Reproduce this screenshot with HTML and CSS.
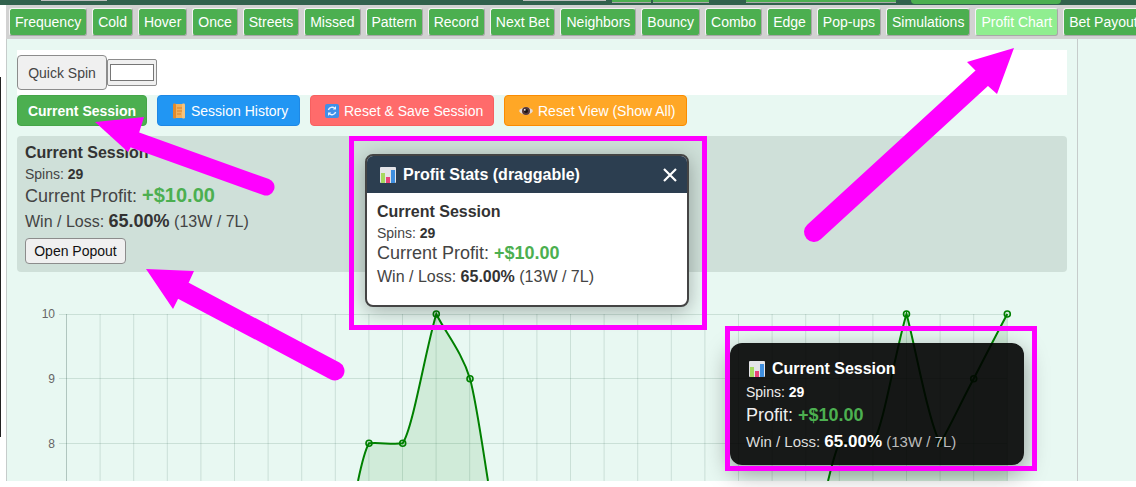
FILE: index.html
```html
<!DOCTYPE html>
<html lang="en">
<head>
<meta charset="utf-8">
<title>Profit Chart</title>
<link rel="stylesheet" href="styles.css">
</head>
<body>
<div class="page">
  <div class="topstrip">
    <span class="bit bit-a"></span>
    <span class="bit bit-b"></span>
    <span class="bit bit-c"></span>
    <span class="bit bit-d"></span>
    <span class="bit bit-e"></span>
    <span class="bit bit-f"></span>
  </div>
  <div class="shell">
    <nav class="tabs">
      <button class="tab">Frequency</button>
      <button class="tab">Cold</button>
      <button class="tab">Hover</button>
      <button class="tab">Once</button>
      <button class="tab">Streets</button>
      <button class="tab">Missed</button>
      <button class="tab">Pattern</button>
      <button class="tab">Record</button>
      <button class="tab">Next Bet</button>
      <button class="tab">Neighbors</button>
      <button class="tab">Bouncy</button>
      <button class="tab">Combo</button>
      <button class="tab">Edge</button>
      <button class="tab">Pop-ups</button>
      <button class="tab">Simulations</button>
      <button class="tab tab-active">Profit Chart</button>
      <button class="tab">Bet Payout</button>
    </nav>
    <div class="content">
      <main class="panel">
        <div class="spinrow">
          <button class="quick">Quick Spin</button>
          <span class="inputwrap"><input class="spininput" type="text" aria-label="Spin"></span>
        </div>
        <div class="actions">
          <button class="act act-green">Current Session</button>
          <button class="act act-blue">
            <svg class="ico" viewBox="0 0 14 16"><path d="M2 1h10v14H3z" fill="#f2b05a"/><rect x="1" y="0.5" width="3" height="15" rx="1.2" fill="#e08a2e"/><rect x="10" y="0.5" width="3" height="15" rx="1.2" fill="#f5c37c"/><path d="M5 5h5M5 8h5M5 11h4" stroke="#d9822b" stroke-width="1"/></svg>Session History
          </button>
          <button class="act act-red">
            <svg class="ico" viewBox="0 0 14 16"><rect x="0" y="1" width="14" height="14" rx="2" fill="#3f8fe8"/><path d="M3.4 7a3.8 3.8 0 0 1 6.4-1.6M10.6 9a3.8 3.8 0 0 1-6.4 1.6" fill="none" stroke="#e8f3ff" stroke-width="1.4"/><path d="M11 3v3.4H7.8zM3 13V9.600h3.200z" fill="#e8f3ff"/></svg>Reset &amp; Save Session
          </button>
          <button class="act act-orange">
            <svg class="ico" viewBox="0 0 14 16"><path d="M0 8c3-5 11-5 14 0-3 5-11 5-14 0z" fill="#e6dcd8"/><circle cx="7" cy="8" r="4" fill="#5a3a3a"/><circle cx="7" cy="8" r="2" fill="#1d1414"/><circle cx="5.800" cy="6.800" r="0.900" fill="#fff"/></svg>Reset View (Show All)
          </button>
        </div>
        <section class="summary">
          <h3 class="sum-title">Current Session</h3>
          <div class="sum-spins">Spins: <b>29</b></div>
          <div class="sum-profit">Current Profit: <b class="pos">+$10.00</b></div>
          <div class="sum-wl">Win / Loss: <b>65.00%</b> (13W / 7L)</div>
          <button class="popout">Open Popout</button>
        </section>
        <svg class="chart" viewBox="17 272 1050 209" width="1050" height="209">
          <g class="grid">
            <path class="axis" d="M66.500 314V481"/>
            <path d="M100.100 314V481M133.700 314V481M167.300 314V481M200.900 314V481M234.500 314V481M268.100 314V481M301.700 314V481M335.300 314V481M368.900 314V481M402.500 314V481M436.100 314V481M469.700 314V481M503.300 314V481M536.900 314V481M570.500 314V481M604.100 314V481M637.700 314V481M671.300 314V481M704.900 314V481M738.500 314V481M772.100 314V481M805.700 314V481M839.300 314V481M872.900 314V481M906.500 314V481M940.100 314V481M973.700 314V481M1007.300 314V481"/>
            <path d="M59 314.500H1007M59 378.500H1007M59 443.500H1007"/>
          </g>
          <g class="labels">
            <text x="55" y="318">10</text>
            <text x="55" y="383">9</text>
            <text x="55" y="448">8</text>
          </g>
          <path class="fill" d="M358 481C362 462 365 450 369 443.300C380 442 392 445 402.700 443.300C413 428 425 352 436.300 314C445 332 462 352 470 378.700C476 400 483 450 488 481Z"/>
          <path class="fill" d="M828 481C832 465 835 452 839.300 443.300C850 442 862 445 872.900 443.300C884 425 895 352 906.500 314C915 345 928 420 940.100 443.300C951 425 962 400 973.700 378.700C985 357 996 335 1007.300 314V481Z"/>
          <path class="line" d="M358 481C362 462 365 450 369 443.300C380 442 392 445 402.700 443.300C413 428 425 352 436.300 314C445 332 462 352 470 378.700C476 400 483 450 488 481"/>
          <path class="line" d="M828 481C832 465 835 452 839.300 443.300C850 442 862 445 872.900 443.300C884 425 895 352 906.500 314C915 345 928 420 940.100 443.300C951 425 962 400 973.700 378.700C985 357 996 335 1007.300 314"/>
          <g class="pts">
            <circle cx="369" cy="443.300" r="3"/><circle cx="402.700" cy="443.300" r="3"/><circle cx="436.300" cy="314" r="3"/><circle cx="470" cy="378.700" r="3"/>
            <circle cx="839.300" cy="443.300" r="3"/><circle cx="872.900" cy="443.300" r="3"/><circle cx="906.500" cy="314" r="3"/><circle cx="940.100" cy="443.300" r="3"/><circle cx="973.700" cy="378.700" r="3"/><circle cx="1007.300" cy="314" r="3"/>
          </g>
        </svg>
      </main>
    </div>
  </div>

  <div class="edge-line"></div>

  <aside class="stats">
    <header class="stats-head">
      <svg class="barico" viewBox="0 0 16 16"><rect width="16" height="16" rx="1" fill="#e4e4e8"/><rect x="1" y="6" width="4" height="10" fill="#a6d85f"/><rect x="6" y="10" width="4" height="6" fill="#e8437a"/><rect x="11" y="3" width="4" height="13" fill="#3f8fe0"/></svg>
      <span class="stats-title">Profit Stats (draggable)</span>
      <svg class="closex" viewBox="0 0 14 14"><path d="M1 1L13 13M13 1L1 13"/></svg>
    </header>
    <div class="stats-body">
      <h3 class="sum-title">Current Session</h3>
      <div class="sum-spins">Spins: <b>29</b></div>
      <div class="sum-profit small">Current Profit: <b class="pos">+$10.00</b></div>
      <div class="sum-wl small">Win / Loss: <b>65.00%</b> (13W / 7L)</div>
    </div>
  </aside>

  <aside class="hud">
    <div class="hud-title"><svg class="barico" viewBox="0 0 16 16"><rect width="16" height="16" rx="1" fill="#e4e4e8"/><rect x="1" y="6" width="4" height="10" fill="#a6d85f"/><rect x="6" y="10" width="4" height="6" fill="#e8437a"/><rect x="11" y="3" width="4" height="13" fill="#3f8fe0"/></svg>Current Session</div>
    <div class="hud-spins">Spins: <b>29</b></div>
    <div class="hud-profit">Profit: <b class="pos">+$10.00</b></div>
    <div class="hud-wl">Win / Loss: <b>65.00%</b> <span class="hud-rec">(13W / 7L)</span></div>
  </aside>

  <div class="mark mark-a"></div>
  <div class="mark mark-b"></div>

  <svg class="arrows" viewBox="0 0 1136 487" width="1136" height="487">
    <path class="shaft s1" d="M266 187L135 140"/>
    <path class="head" d="M95 122L144 117L139 133L128 152Z"/>
    <path class="shaft s2" d="M814 232L982 78"/>
    <path class="head" d="M1014 48L967 62L976 71L988 86L997 94Z"/>
    <path class="shaft s3" d="M335 371L182 290"/>
    <path class="head" d="M146 269L194 271L189 282L178 299L173 309Z"/>
  </svg>
</div>
</body>
</html>
```
FILE: styles.css
```css
* { box-sizing: border-box; }
html, body { margin: 0; padding: 0; background: #fff; }
body { font-family: "Liberation Sans", Arial, sans-serif; color: #444; }
.page { position: relative; width: 1136px; height: 487px; overflow: hidden; background: #fff; }

.topstrip { display: flex; align-items: flex-start; height: 5px; background: #31614d; }
.bit { display: block; }
.bit-a { width: 66px; height: 1px; margin-left: 41px; background: #bdbdbd; }
.bit-b { width: 83px; height: 1px; margin-left: 416px; background: #bdbdbd; }
.bit-c { width: 39px; height: 3px; margin-left: 6px; background: #4caf50; border-bottom: 1px solid #aaa; }
.bit-d { width: 56px; height: 3px; margin-left: 2px; background: #4caf50; border-bottom: 1px solid #aaa; }
.bit-e { width: 150px; height: 3px; margin-left: 37px; background: #4caf50; border-bottom: 1px solid #aaa; }
.bit-f { width: 150px; height: 4px; margin-left: 15px; background: #4caf50; border-radius: 0 0 4px 4px; }

.shell { margin-left: 6px; }
.tabs { display: flex; gap: 5px; height: 34px; padding: 3px 0 0 3px; background: #d2d2d2; overflow: hidden; white-space: nowrap; }
.tab {
  flex: none; height: 28px; padding: 0 5px; font: 14px/16px "Liberation Sans", Arial, sans-serif;
  color: #fff; background: #4caf50; border: 1px solid; border-color: #f4f4f4 #a8a8a8 #a8a8a8 #f4f4f4; border-radius: 3px;
}
.tab-active { background: #90ee90; }

.content { background: #e8f8f2; height: 442px; }
.panel { width: 1072px; height: 442px; padding: 11px 10px 0; border-left: 1px solid #c6cccb; border-right: 1px solid #c6cccb; overflow: hidden; }

.spinrow { display: flex; align-items: center; height: 45px; background: #fff; }
.quick { width: 90px; height: 35px; padding: 0; font: 14px "Liberation Sans", Arial, sans-serif; color: #444; background: #f0f0f0; border: 1px solid #8c8c8c; border-radius: 4px; }
.inputwrap { display: flex; align-items: center; justify-content: center; width: 50px; height: 27px; background: #f0f0f0; border: 1px solid #8c8c8c; border-radius: 2px; }
.spininput { width: 44px; height: 17px; padding: 0; background: #fff; border: 1px solid #767676; }

.actions { display: flex; gap: 10px; height: 31px; }
.act { display: flex; align-items: center; padding: 0 10px; font: 14px "Liberation Sans", Arial, sans-serif; color: #fff; border: 1px solid; border-radius: 4px; white-space: nowrap; }
.act-green { background: #4caf50; border-color: #45a549; font-weight: bold; width: 130px; justify-content: center; }
.act-blue { background: #2196f3; border-color: #1e88e5; width: 143px; }
.act-red { background: #ff6b6b; border-color: #f76060; width: 184px; }
.act-orange { background: #ffa726; border-color: #fb8c00; width: 183px; }
.ico { width: 14px; height: 16px; margin: 0 5px 0 4px; flex: none; }

.summary { height: 136px; margin-top: 10px; padding: 8px; background: #cfe0d9; border-radius: 4px; }
.sum-title { margin: 0; font-size: 16px; line-height: 18px; font-weight: bold; color: #333; }
.sum-spins { margin-top: 4px; font-size: 14px; line-height: 16px; }
.sum-spins b, .sum-wl b { color: #333; }
.sum-profit { margin-top: 1px; font-size: 18px; line-height: 25px; }
.sum-profit b { font-size: 20px; }
.sum-profit .pos { color: #4caf50; }
.pos { color: #4caf50; }
.sum-wl { margin-top: 1px; font-size: 16px; line-height: 22px; }
.sum-wl b { font-size: 18px; }
.popout { display: block; width: 101px; height: 26px; margin-top: 5px; padding: 0; font: 14px "Liberation Sans", Arial, sans-serif; color: #111; background: #f0f0f0; border: 1px solid #8c8c8c; border-radius: 4px; }

.chart { display: block; }
.grid path { fill: none; stroke: rgba(0, 60, 40, 0.13); stroke-width: 1; }
.grid .axis { stroke: rgba(0, 40, 30, 0.24); }
.labels text { font: 12px "Liberation Sans", Arial, sans-serif; fill: #666; text-anchor: end; }
.fill { fill: rgba(0, 128, 0, 0.1); stroke: none; }
.line { fill: none; stroke: #008000; stroke-width: 2; }
.pts circle { fill: rgba(0, 128, 0, 0.1); stroke: #008000; stroke-width: 1.6; }

.edge-line { position: absolute; left: 0; top: 77px; width: 1px; height: 360px; background: #222; }

.stats { position: absolute; left: 365px; top: 154px; width: 324px; height: 153px; background: #fff; border: 2px solid #444; border-radius: 8px; box-shadow: 0 4px 20px rgba(0, 0, 0, 0.3); overflow: hidden; }
.stats-head { display: flex; align-items: center; height: 37px; padding: 0 9px 0 13px; background: #2c3e50; color: #fff; font-size: 16px; font-weight: bold; }
.barico { width: 16px; height: 16px; flex: none; }
.stats-title { margin-left: 7px; padding-top: 1px; flex: 1; }
.closex { width: 14px; height: 14px; fill: none; stroke: #fff; stroke-width: 2.2; margin-right: 1px; }
.stats-body { padding: 10px 10px; }
.stats-body .sum-spins { margin-top: 4px; }
.sum-profit.small { margin-top: 0; line-height: 24px; }
.sum-profit.small b { font-size: 18px; }
.sum-wl.small { margin-top: 1px; }
.sum-wl.small b { font-size: 16px; }

.hud { position: absolute; left: 730px; top: 343px; width: 294px; height: 122px; padding: 17px 16px 16px; background: rgba(0, 0, 0, 0.9); color: #fff; border-radius: 12px; box-shadow: 0 8px 24px rgba(0, 0, 0, 0.4); }
.hud-title { display: flex; align-items: center; margin-left: 3px; font-size: 16px; line-height: 18px; font-weight: bold; }
.hud-title .barico { margin-right: 7px; }
.hud-spins { margin-top: 6px; font-size: 14px; line-height: 16px; color: #eee; }
.hud-spins b { color: #fff; }
.hud-profit { margin-top: 2px; font-size: 18px; line-height: 26px; color: #eee; }
.hud-wl { margin-top: 3px; font-size: 15px; line-height: 22px; color: #ddd; }
.hud-wl b { font-size: 17px; color: #fff; }
.hud-rec { color: #bbb; }

.mark { position: absolute; border: 5px solid #ff00ff; }
.mark-a { left: 349px; top: 136px; width: 358px; height: 194px; }
.mark-b { left: 725px; top: 326px; width: 312px; height: 145px; }

.arrows { position: absolute; left: 0; top: 0; pointer-events: none; }
.shaft { fill: none; stroke: #ff00ff; stroke-linecap: round; }
.s1 { stroke-width: 17px; }
.s2 { stroke-width: 20px; }
.s3 { stroke-width: 19px; }
.head { fill: #ff00ff; }
```
